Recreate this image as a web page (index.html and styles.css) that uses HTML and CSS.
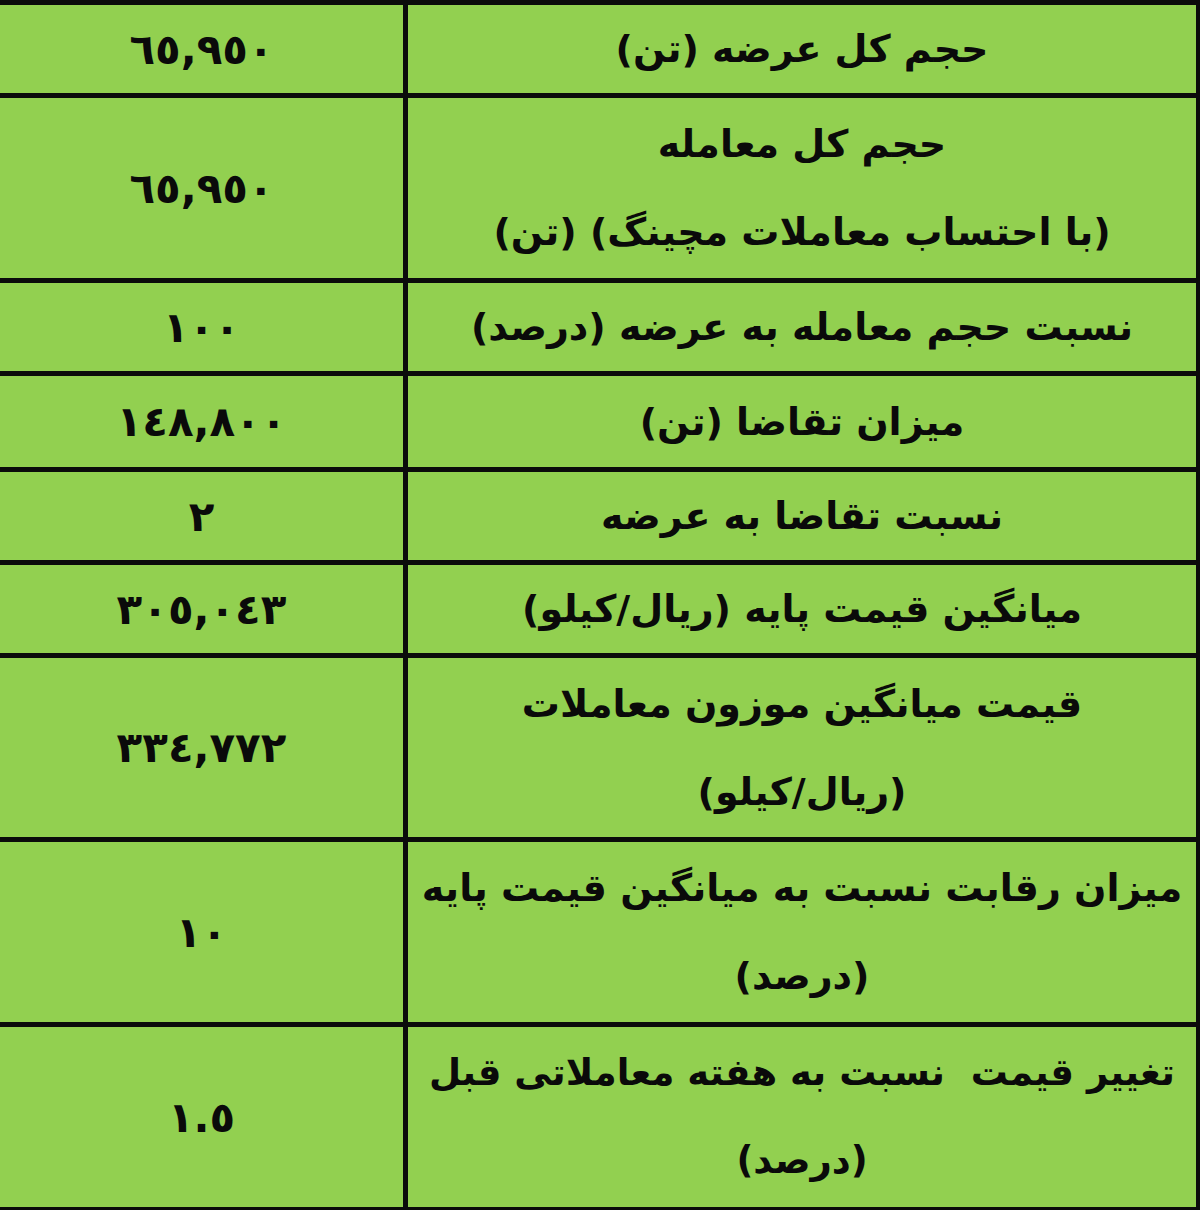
FILE: index.html
```html
<!DOCTYPE html>
<html lang="fa" dir="rtl">
<head>
<meta charset="utf-8">
<title>جدول معاملات</title>
<link rel="stylesheet" href="styles.css">
</head>
<body>
<table class="sheet">
  <tbody>
    <tr class="r1"><td class="label">حجم کل عرضه (تن)</td><td class="value">٦٥,٩٥٠</td></tr>
    <tr class="r2"><td class="label">حجم کل معامله<br>(با احتساب معاملات مچینگ) (تن)</td><td class="value">٦٥,٩٥٠</td></tr>
    <tr class="r3"><td class="label">نسبت حجم معامله به عرضه (درصد)</td><td class="value">١٠٠</td></tr>
    <tr class="r4"><td class="label">میزان تقاضا (تن)</td><td class="value">١٤٨,٨٠٠</td></tr>
    <tr class="r5"><td class="label">نسبت تقاضا به عرضه</td><td class="value">٢</td></tr>
    <tr class="r6"><td class="label">میانگین قیمت پایه (ریال/کیلو)</td><td class="value">٣٠٥,٠٤٣</td></tr>
    <tr class="r7"><td class="label">قیمت میانگین موزون معاملات<br>(ریال/کیلو)</td><td class="value">٣٣٤,٧٧٢</td></tr>
    <tr class="r8"><td class="label">میزان رقابت نسبت به میانگین قیمت پایه<br>(درصد)</td><td class="value">١٠</td></tr>
    <tr class="r9"><td class="label">تغییر قیمت&nbsp; نسبت به هفته معاملاتی قبل<br>(درصد)</td><td class="value">١.٥</td></tr>
  </tbody>
</table>
</body>
</html>
```
FILE: styles.css
```css
html, body {
  margin: 0;
  padding: 0;
  background: #0d0d0d;
}

.sheet {
  width: 1200px;
  border-collapse: separate;
  border-spacing: 0;
  table-layout: fixed;
  border-top: 5px solid #0b0b0b;
  background: #92d050;
  font-family: "DejaVu Sans", sans-serif;
  font-weight: bold;
  color: #0a0a0a;
}

.sheet td {
  padding: 0;
  text-align: center;
  vertical-align: middle;
  border-bottom: 5px solid #0b0b0b;
  background: #92d050;
}

.label {
  width: 788px;
  border-right: 4px solid #0b0b0b;
  border-left: 5px solid #0b0b0b;
  font-size: 38px;
  line-height: 88px;
  white-space: nowrap;
}

.r9 .label {
  font-size: 37px;
}

.value {
  width: 403px;
  font-size: 42px;
  direction: ltr;
}

.r1 td { height: 88px; }
.r2 td { height: 180px; }
.r3 td { height: 87px; }
.r4 td { height: 91px; }
.r5 td { height: 87px; }
.r6 td { height: 88px; }
.r7 td { height: 179px; }
.r8 td { height: 180px; }
.r9 td { height: 180px; }
```
